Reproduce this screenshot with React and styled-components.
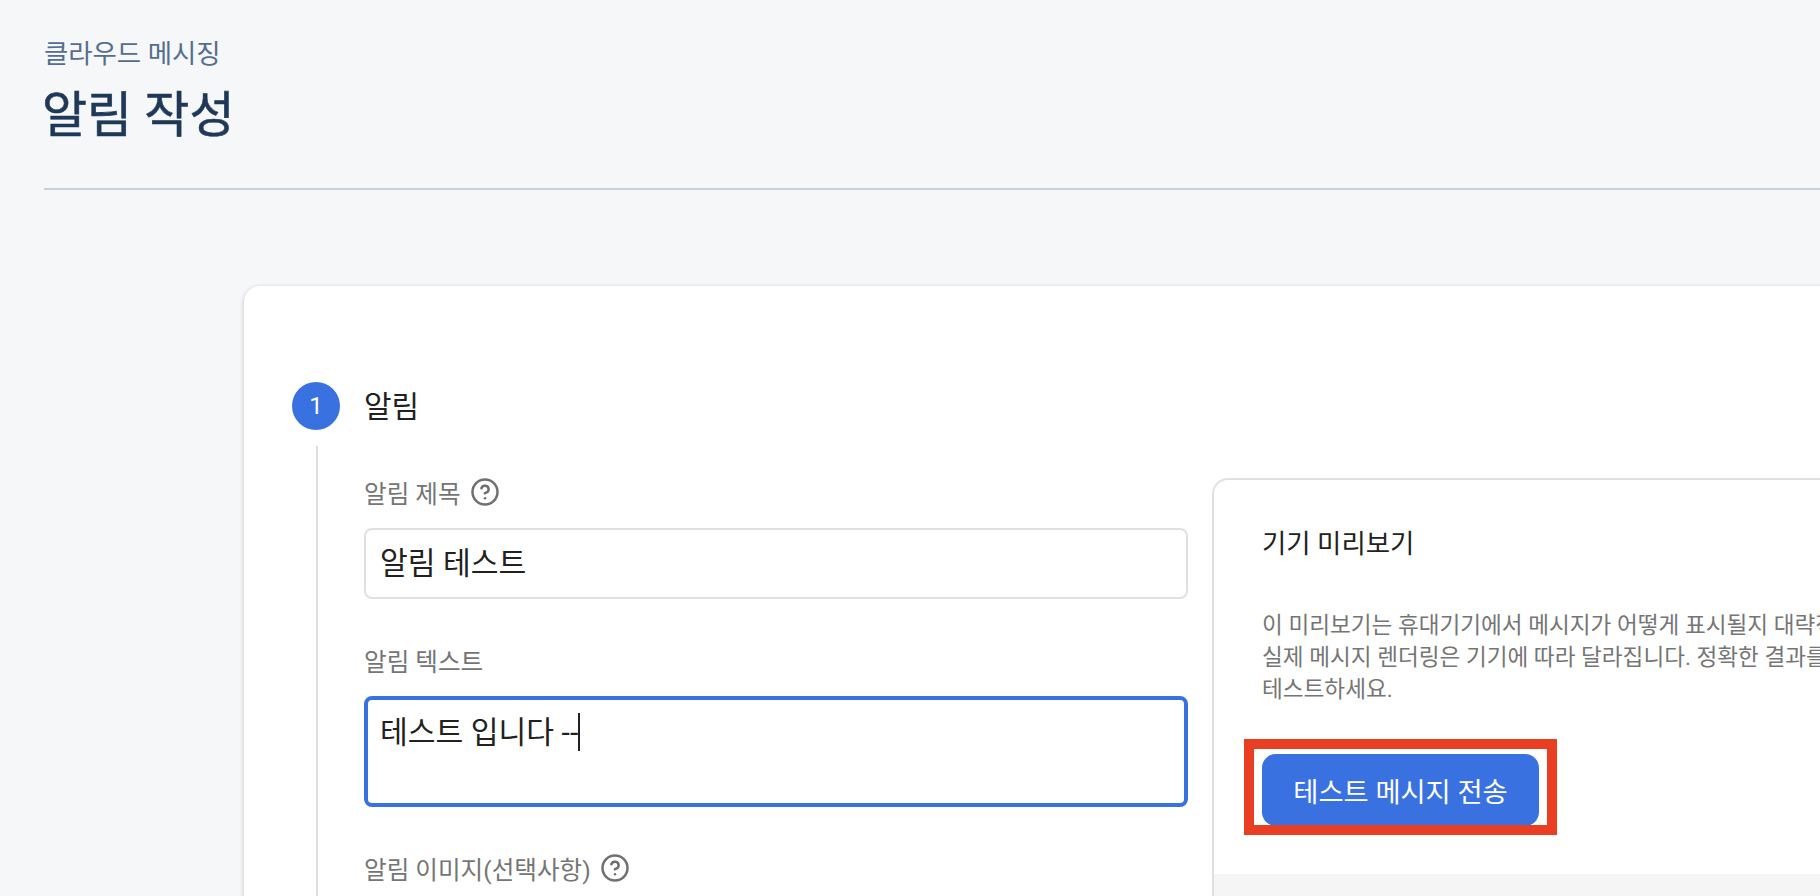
import React from "react"
import styled, { createGlobalStyle } from "styled-components"
import { CircleHelp } from "lucide-react"

const GlobalStyle = createGlobalStyle`
  html, body {
    margin: 0;
    height: 100%;
    overflow: hidden;
    background: #f6f7f9;
    font-family: Roboto, "Noto Sans CJK KR", sans-serif;
  }
`

const Page = styled.div`
  width: 1820px;
  height: 896px;
  overflow: hidden;
  background: #f6f7f9;
`

const Header = styled.header`
  margin-left: 44px;
  height: 190px;
  padding-top: 36px;
  box-sizing: border-box;
  border-bottom: 2px solid #c5d1e0;
`

const Breadcrumb = styled.div`
  font-size: 26.4px;
  line-height: 36px;
  color: #546e8f;
`

const Title = styled.h1`
  margin: 12px 0 0 -2px;
  font-size: 49px;
  line-height: 64px;
  font-weight: 400;
  -webkit-text-stroke: 0.6px #1f3857;
  color: #1f3857;
`

const Card = styled.main`
  margin: 96px 0 0 244px;
  width: 1700px;
  height: 700px;
  padding: 96px 0 0 48px;
  box-sizing: border-box;
  background: #fff;
  border-radius: 16px;
  box-shadow: 0 1px 4px rgba(60, 70, 90, 0.3);
`

const StepHeader = styled.div`
  display: flex;
  align-items: center;
  gap: 24px;
`

const StepNumber = styled.div`
  width: 48px;
  height: 48px;
  border-radius: 50%;
  background: #3a71e0;
  color: #fff;
  font-size: 24px;
  display: flex;
  align-items: center;
  justify-content: center;
`

const StepTitle = styled.h2`
  margin: -4px 0 0;
  font-size: 30px;
  font-weight: 400;
  color: #212121;
`

const StepBody = styled.div`
  display: flex;
  gap: 24px;
  margin: 16px 0 0 24px;
  padding-left: 46px;
  height: 500px;
  border-left: 2px solid #dedede;
`

const FormColumn = styled.div`
  width: 824px;
  flex: none;
  padding-top: 29px;
`

const FieldGroup = styled.div`
  margin-bottom: 44px;
`

const Label = styled.div`
  display: flex;
  align-items: center;
  gap: 9px;
  height: 34px;
  margin-bottom: 19px;
  font-size: 24.6px;
  color: #757575;
`

const Help = styled(CircleHelp)`
  flex: none;
  color: #707070;
`

const Field = styled.div`
  box-sizing: border-box;
  width: 100%;
  height: ${({ $focused }) => ($focused ? "111px" : "71px")};
  padding: ${({ $focused }) => ($focused ? "13px 12px" : "0 14px")};
  display: flex;
  align-items: ${({ $focused }) => ($focused ? "flex-start" : "center")};
  border: ${({ $focused }) => ($focused ? "4px solid #3a71e0" : "2px solid #e0e0e0")};
  border-radius: 8px;
  font-size: 30.2px;
  line-height: 40px;
  color: #212121;
  background: #fff;
  white-space: pre;
`

const Caret = styled.span`
  display: inline-block;
  width: 2px;
  height: 38px;
  background: #212121;
`

const PreviewCard = styled.section`
  position: relative;
  flex: none;
  align-self: flex-start;
  margin-top: 32px;
  width: 640px;
  height: 480px;
  box-sizing: border-box;
  padding: 46px 48px 0;
  border: 2px solid #e0e0e0;
  border-radius: 16px 16px 0 0;
  background: #fff;
`

const PreviewTitle = styled.h3`
  margin: 0;
  font-size: 26.4px;
  line-height: 36px;
  font-weight: 400;
  color: #212121;
`

const PreviewText = styled.p`
  margin: 48px 0 0;
  width: 800px;
  font-size: 22.6px;
  line-height: 32px;
  color: #757575;
`

const ButtonFrame = styled.div`
  position: relative;
  margin-top: 48px;
  width: 277px;
`

const SendButton = styled.button`
  display: block;
  width: 277px;
  height: 72px;
  padding: 0;
  border: 0;
  border-radius: 14px;
  background: #3a71e0;
  color: #fff;
  font-family: inherit;
  font-size: 27.3px;
`

// red annotation box drawn over the screenshot
const Annotation = styled.div`
  position: absolute;
  left: -18px;
  top: -15px;
  width: 313px;
  height: 96px;
  box-sizing: border-box;
  border: 10px solid #ea3e23;
`

const PreviewFooter = styled.div`
  position: absolute;
  left: 0;
  right: 0;
  top: 394px;
  bottom: 0;
  background: #f5f5f5;
`

export default function App() {
  return (
    <Page>
      <GlobalStyle />
      <Header>
        <Breadcrumb>클라우드 메시징</Breadcrumb>
        <Title>알림 작성</Title>
      </Header>
      <Card>
        <StepHeader>
          <StepNumber>1</StepNumber>
          <StepTitle>알림</StepTitle>
        </StepHeader>
        <StepBody>
          <FormColumn>
            <FieldGroup>
              <Label>알림 제목 <Help size={30} strokeWidth={2} /></Label>
              <Field>알림 테스트</Field>
            </FieldGroup>
            <FieldGroup>
              <Label>알림 텍스트</Label>
              <Field $focused>테스트 입니다 --<Caret /></Field>
            </FieldGroup>
            <FieldGroup>
              <Label>알림 이미지(선택사항) <Help size={30} strokeWidth={2} /></Label>
            </FieldGroup>
          </FormColumn>
          <PreviewCard>
            <PreviewTitle>기기 미리보기</PreviewTitle>
            <PreviewText>
              이 미리보기는 휴대기기에서 메시지가 어떻게 표시될지 대략적으로 보여줍니다.
              <br />
              실제 메시지 렌더링은 기기에 따라 달라집니다. 정확한 결과를 얻으려면 기기에서
              <br />
              테스트하세요.
            </PreviewText>
            <ButtonFrame>
              <SendButton>테스트 메시지 전송</SendButton>
              <Annotation />
            </ButtonFrame>
            <PreviewFooter />
          </PreviewCard>
        </StepBody>
      </Card>
    </Page>
  )
}
